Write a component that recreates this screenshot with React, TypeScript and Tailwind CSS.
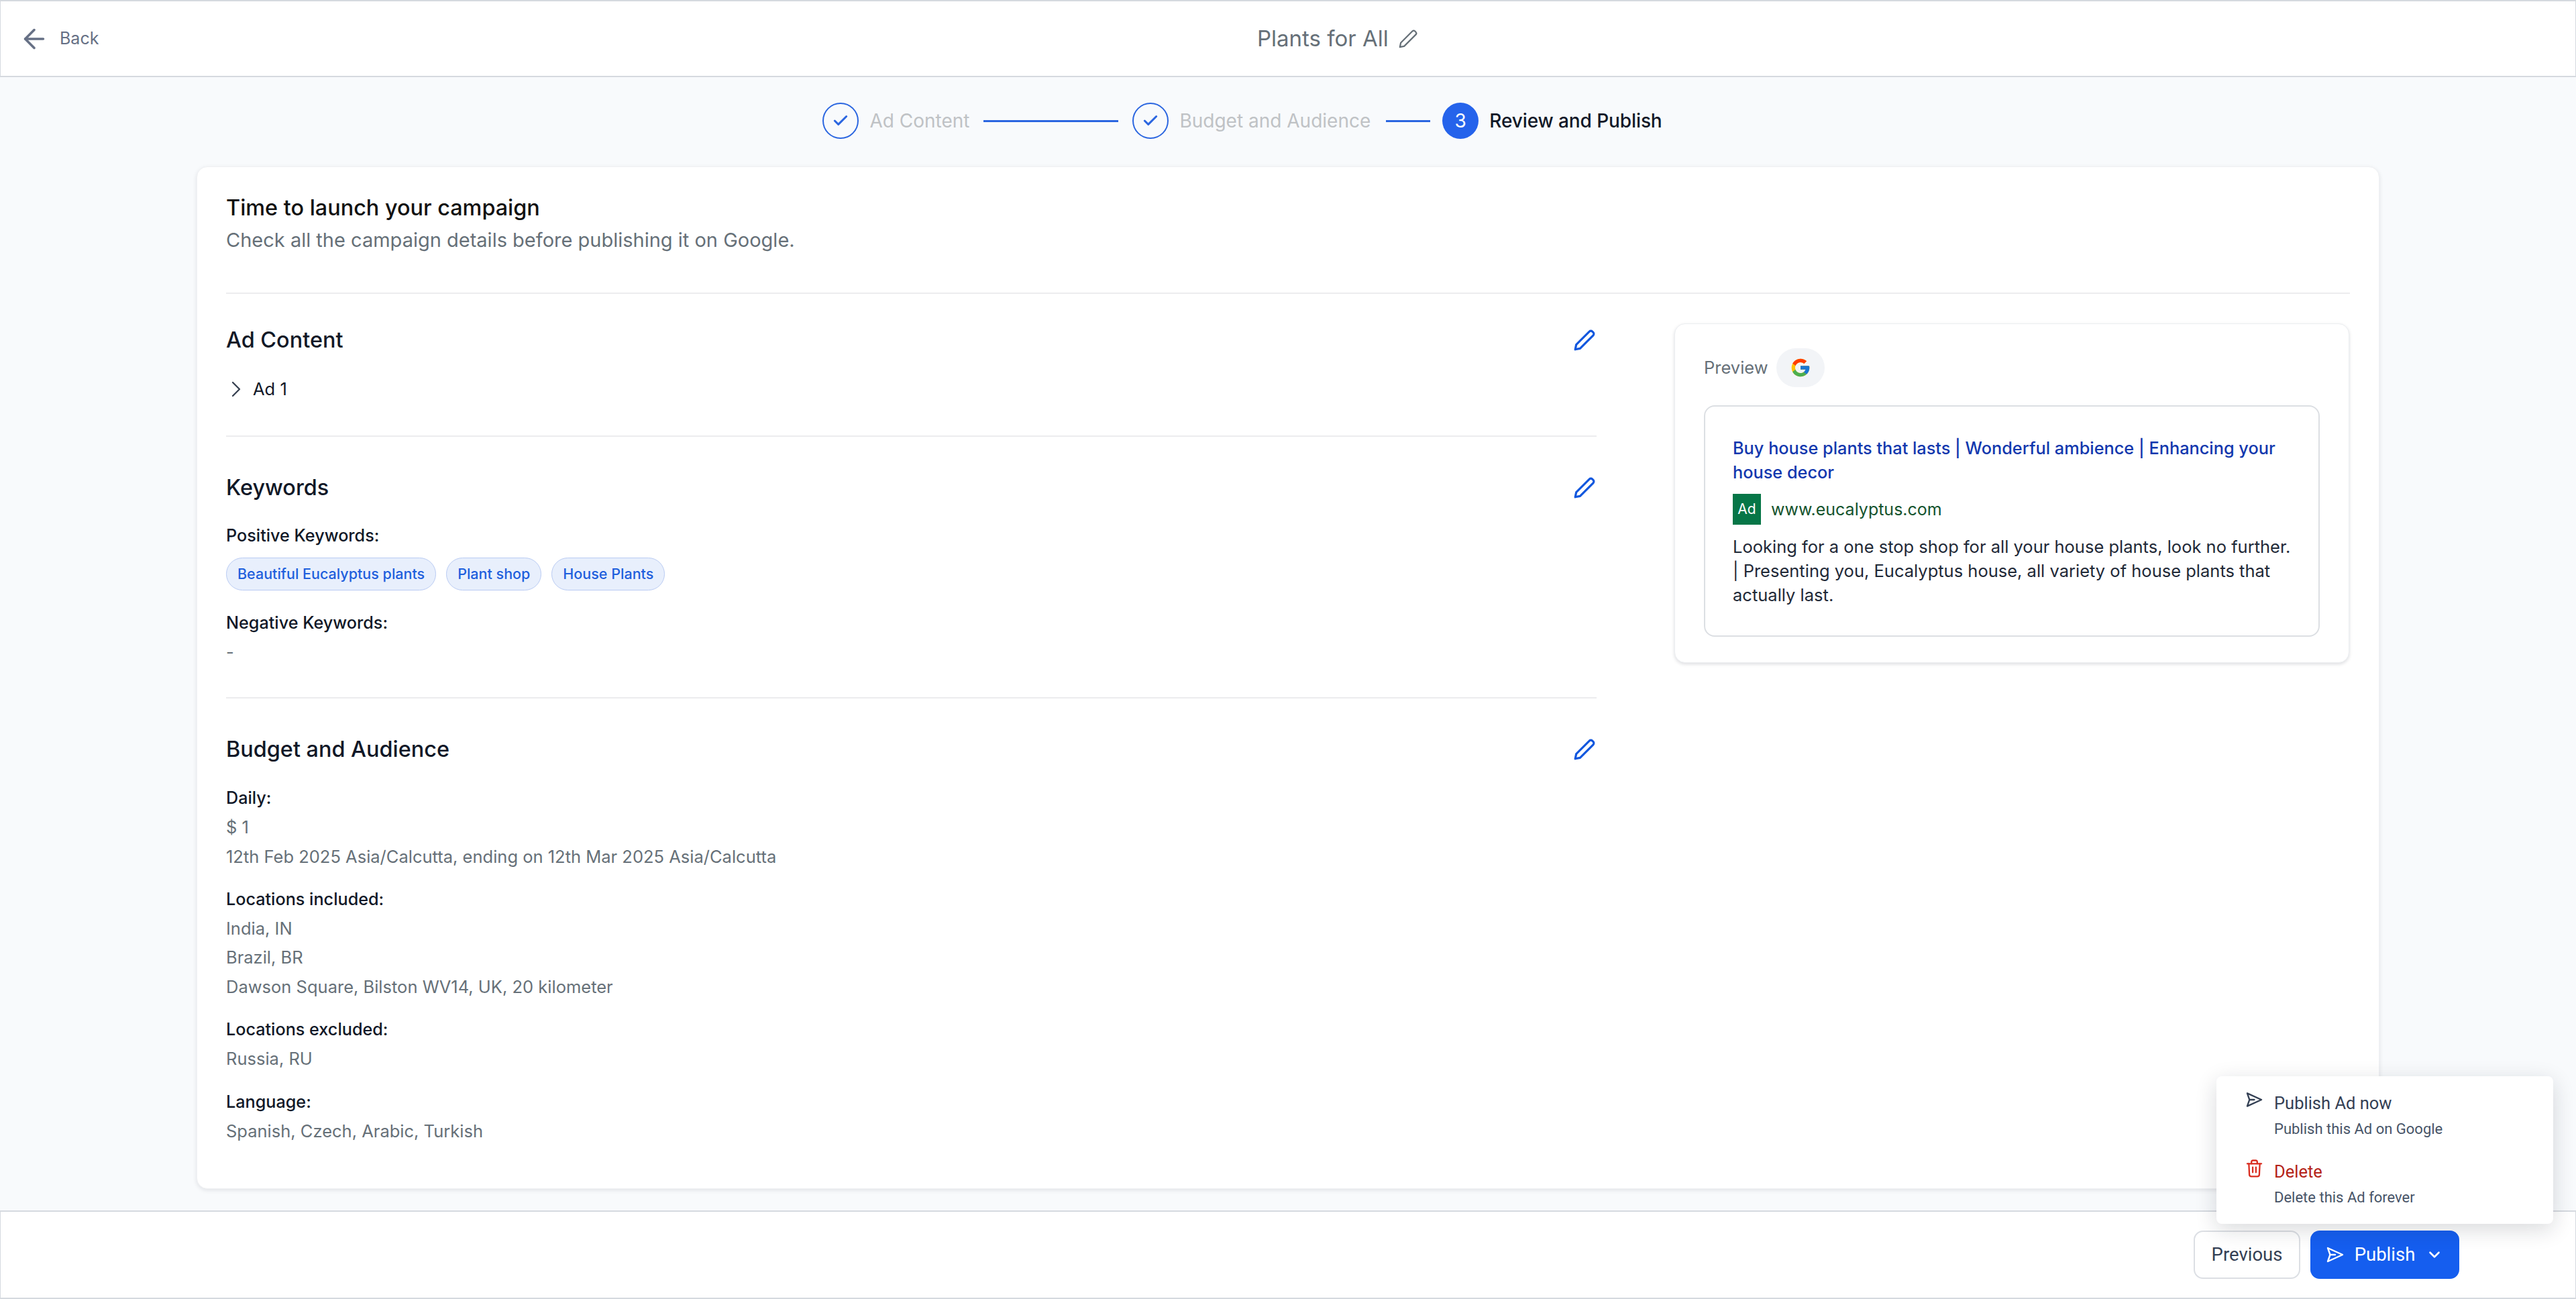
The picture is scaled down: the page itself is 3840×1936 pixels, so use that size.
import { ArrowLeft, Check, ChevronDown, ChevronRight } from 'lucide-react';
import { FcGoogle } from 'react-icons/fc';

const PencilIcon = ({ className }: { className: string }) => (
  <svg viewBox="0 0 32 32" fill="none" stroke="currentColor" strokeLinejoin="round" strokeLinecap="round" className={className}>
    <path d="M3 29l1.4-6.8L22.8 3.8a3 3 0 0 1 4.2 0l1.2 1.2a3 3 0 0 1 0 4.2L9.8 27.6z" />
  </svg>
);

const SendIcon = ({ className }: { className: string }) => (
  <svg viewBox="0 0 26 24" fill="none" stroke="currentColor" strokeWidth="2.4" strokeLinejoin="round" strokeLinecap="round" className={className}>
    <path d="M2 2l22 10L2 22l3.5-10z" />
    <path d="M5.5 12H13" />
  </svg>
);

const TrashIcon = ({ className }: { className: string }) => (
  <svg viewBox="0 0 26 28" fill="none" stroke="currentColor" strokeWidth="2.4" strokeLinejoin="round" strokeLinecap="round" className={className}>
    <path d="M2 6.5h22" />
    <path d="M8.5 6.5V4a2.5 2.5 0 0 1 2.5-2.5h4A2.5 2.5 0 0 1 17.5 4v2.5" />
    <path d="M4.5 6.5l.8 17a3 3 0 0 0 3 2.8h9.4a3 3 0 0 0 3-2.8l.8-17" />
    <path d="M10.5 12v8M15.5 12v8" />
  </svg>
);

const Divider = ({ className }: { className: string }) => <div className={`h-[2px] bg-[#ececee] ${className}`} />;

const SectionTitle = ({ title }: { title: string }) => (
  <div className="flex items-center justify-between h-[40px]">
    <h3 className="pt-[2px] text-[32.4px] leading-[40px] font-medium text-[#111827]">{title}</h3>
    <PencilIcon className="w-[34px] h-[34px] mt-[1px] mr-[1px] text-[#1257de] [stroke-width:3]" />
  </div>
);

const InfoGroup = ({ label, rows }: { label: string; rows: string[] }) => (
  <div className="leading-[43.3px]">
    <div className="text-[25.2px] font-[450] text-[#111827]">{label}</div>
    {rows.map((row) => (
      <div key={row} className="text-[25.5px] text-[#667078]">{row}</div>
    ))}
  </div>
);

const keywords = ['Beautiful Eucalyptus plants', 'Plant shop', 'House Plants'];

const Step = ({ label, done, number }: { label: string; done?: boolean; number?: number }) => (
  <div className="flex items-center gap-[16px]">
    {done ? (
      <div className="w-[54px] h-[54px] rounded-full border-2 border-[#2b66e0] flex items-center justify-center">
        <Check className="w-[26px] h-[26px] text-[#2b66e0]" strokeWidth={2.8} />
      </div>
    ) : (
      <div className="w-[54px] h-[54px] rounded-full bg-[#2563eb] flex items-center justify-center text-white text-[28px]">{number}</div>
    )}
    <span className={`text-[28px] leading-[40px] ${done ? 'text-[#bfc2c5]' : 'text-[#111827] font-[450] tracking-[-0.1px]'}`}>{label}</span>
  </div>
);

export default function App() {
  return (
    <div className="relative h-[1936px] w-[3840px] overflow-hidden bg-[#f8fafc] flex flex-col font-['Inter',sans-serif]">
      <header className="h-[115px] shrink-0 bg-white border-y-2 border-x border-[#d5d9df] flex items-center">
        <div className="w-[1873px] pl-[27px] flex items-center gap-[15px] text-[#667085]">
          <ArrowLeft className="w-[46px] h-[46px]" strokeWidth={1.9} />
          <span className="text-[25px]">Back</span>
        </div>
        <span className="text-[33px] text-[#667078]">Plants for All</span>
        <PencilIcon className="w-[30px] h-[30px] ml-[14px] text-[#667078] [stroke-width:2.4]" />
      </header>

      <main className="flex-1 min-h-0">
        <div className="flex items-center justify-center pr-[136px] pt-[38px] h-[133px] pb-[41px]">
          <Step label="Ad Content" done />
          <div className="w-[201px] h-[3px] mx-[21px] bg-[#2b66e0]" />
          <Step label="Budget and Audience" done />
          <div className="w-[66px] h-[3px] ml-[23px] mr-[18px] bg-[#2b66e0]" />
          <Step label="Review and Publish" number={3} />
        </div>

        <div className="ml-[293px] w-[3254px] h-[1524px] bg-white rounded-[16px] border border-[#f0f1f3] shadow-[0_2px_6px_rgba(16,24,40,0.1)] px-[43px] pt-[41px]">
          <h2 className="text-[32.4px] leading-[40px] font-medium text-[#111111]">Time to launch your campaign</h2>
          <p className="mt-[8px] text-[29px] leading-[40px] text-[#667078]">Check all the campaign details before publishing it on Google.</p>
          <Divider className="mt-[58px]" />

          <div className="flex items-start gap-[116px]">
            <div className="w-[2043px] pt-[48px]">
              <SectionTitle title="Ad Content" />
              <div className="mt-[34px] flex items-center h-[40px] text-[25.5px] text-[#111827]">
                <ChevronRight className="w-[40px] h-[40px] -ml-[5px] mr-[5px] text-[#374151]" strokeWidth={1.4} />
                Ad 1
              </div>
              <Divider className="mt-[49px]" />

              <div className="mt-[55px]">
                <SectionTitle title="Keywords" />
              </div>
              <div className="mt-[34px] text-[25.2px] leading-[36px] font-[450] text-[#111827]">Positive Keywords:</div>
              <div className="mt-[15px] flex gap-[15px]">
                {keywords.map((keyword) => (
                  <span
                    key={keyword}
                    className="h-[49px] px-[16px] flex items-center rounded-full bg-[#e8effc] border border-[#b9cbf3] text-[21.5px] font-[450] text-[#1f5fdd]"
                  >
                    {keyword}
                  </span>
                ))}
              </div>
              <div className="mt-[30px] text-[25.2px] leading-[36px] font-[450] text-[#111827]">Negative Keywords:</div>
              <div className="mt-[8px] text-[25.5px] leading-[36px] text-[#667078]">-</div>
              <Divider className="mt-[49px]" />

              <div className="mt-[55px]">
                <SectionTitle title="Budget and Audience" />
              </div>
              <div className="mt-[32px] flex flex-col gap-[21px]">
                <InfoGroup label="Daily:" rows={['$ 1', '12th Feb 2025 Asia/Calcutta, ending on 12th Mar 2025 Asia/Calcutta']} />
                <InfoGroup label="Locations included:" rows={['India, IN', 'Brazil, BR', 'Dawson Square, Bilston WV14, UK, 20 kilometer']} />
                <InfoGroup label="Locations excluded:" rows={['Russia, RU']} />
                <InfoGroup label="Language:" rows={['Spanish, Czech, Arabic, Turkish']} />
              </div>
            </div>

            <div className="w-[1006px] h-[506px] mt-[44px] rounded-[16px] border border-[#eceef1] bg-white shadow-[0_2px_5px_rgba(16,24,40,0.14)] px-[43px] pt-[36px]">
              <div className="flex items-center gap-[12px]">
                <span className="text-[25.5px] text-[#667078]">Preview</span>
                <div className="w-[72px] h-[58px] rounded-full bg-[#f2f4f7] flex items-center justify-center">
                  <FcGoogle className="w-[32px] h-[32px]" />
                </div>
              </div>
              <div className="mt-[27px] h-[345px] rounded-[16px] border-2 border-[#dcdfe3] pl-[41px] pr-[28px] pt-[44px]">
                <div className="text-[25.3px] leading-[36px] font-[450] text-[#1238ae]">
                  Buy house plants that lasts | Wonderful ambience | Enhancing your house decor
                </div>
                <div className="mt-[14px] flex items-center gap-[15px]">
                  <span className="w-[42px] h-[46px] bg-[#067647] text-white text-[21px] flex items-center justify-center">Ad</span>
                  <span className="pt-[1px] text-[25px] text-[#14532d]">www.eucalyptus.com</span>
                </div>
                <div className="mt-[15px] text-[25.5px] leading-[36px] text-[#1f2937]">
                  Looking for a one stop shop for all your house plants, look no further. | Presenting you, Eucalyptus house, all variety of house plants that actually last.
                </div>
              </div>
            </div>
          </div>
        </div>
      </main>

      <footer className="h-[132px] shrink-0 bg-white border-y-2 border-x border-[#d5d9df] flex items-start justify-end pt-[28px] pr-[173px] gap-[15px] font-['Roboto',sans-serif]">
        <button className="w-[159px] h-[72px] rounded-[14px] border-2 border-[#dcdfe4] bg-white text-[27.5px] text-[#344054]">Previous</button>
        <button className="w-[222px] h-[72px] rounded-[14px] bg-[#155eef] text-white text-[27.5px] flex items-center justify-center gap-[16px]">
          <SendIcon className="w-[26px] h-[24px]" />
          Publish
          <ChevronDown className="w-[26px] h-[26px]" strokeWidth={2.4} />
        </button>
      </footer>

      <div className="absolute left-[3304px] top-[1604px] w-[502px] h-[220px] rounded-[8px] bg-white shadow-[0_8px_32px_rgba(16,24,40,0.16)] pl-[44px] pt-[22px] font-['Roboto',sans-serif]">
        <div className="flex gap-[17px]">
          <SendIcon className="w-[25px] h-[24px] mt-[1px] text-[#344054]" />
          <div>
            <div className="text-[25.5px] leading-[36px] text-[#344054]">Publish Ad now</div>
            <div className="mt-[3px] text-[22px] leading-[36px] text-[#475467]">Publish this Ad on Google</div>
          </div>
        </div>
        <div className="flex gap-[17px] mt-[27px]">
          <TrashIcon className="w-[25px] h-[27px] text-[#d92d20]" />
          <div>
            <div className="text-[25.5px] leading-[36px] text-[#b42318]">Delete</div>
            <div className="mt-[3px] text-[22px] leading-[36px] text-[#475467]">Delete this Ad forever</div>
          </div>
        </div>
      </div>
    </div>
  );
}
